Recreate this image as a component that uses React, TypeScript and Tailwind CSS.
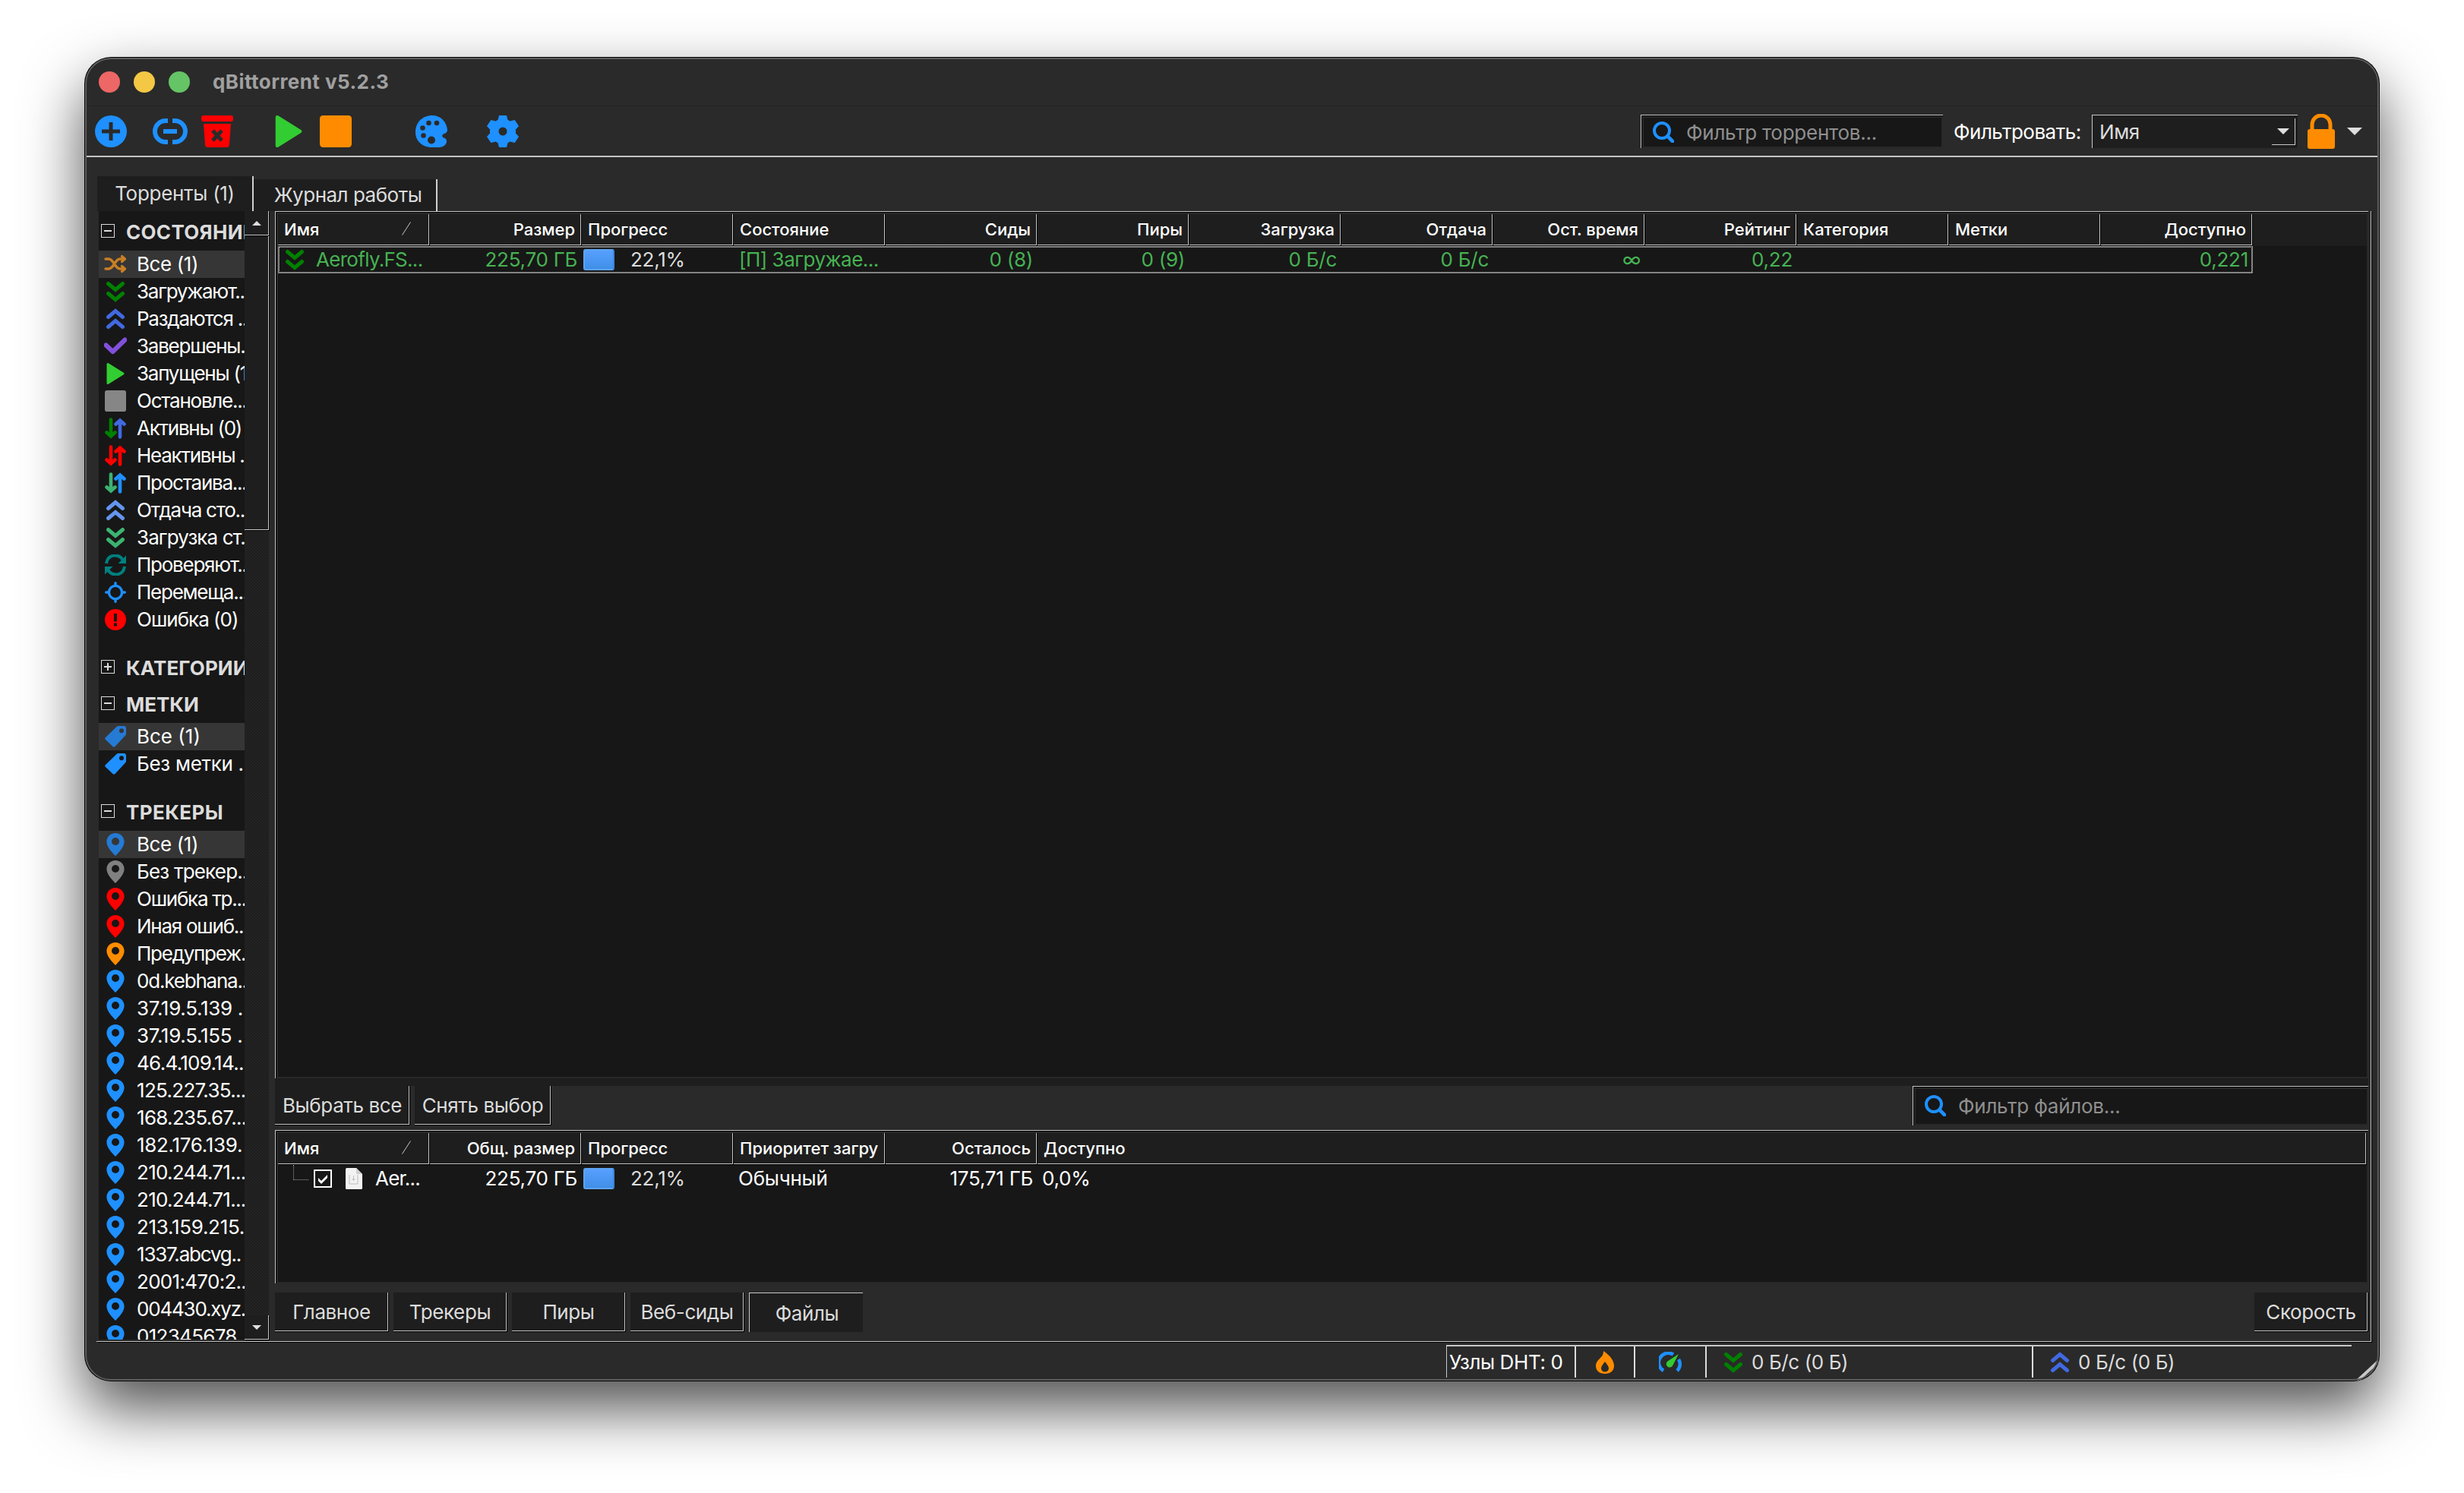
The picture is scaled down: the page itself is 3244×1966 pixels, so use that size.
import type { ReactNode } from "react";
import clsx from "clsx";

type IconProps = { className?: string };

const Chevrons = ({ className }: IconProps) => (
  <svg viewBox="0 0 28 28" className={clsx("w-7 h-7 shrink-0", className)} fill="none" stroke="currentColor" strokeWidth="5" strokeLinecap="round">
    <path d="M4.5 3.5 14 11.5 23.5 3.5M4.5 16.5 14 24.5 23.5 16.5" />
  </svg>
);

const Shuffle = ({ className }: IconProps) => (
  <svg viewBox="-1 0 30 28" className={clsx("w-[30px] h-7 shrink-0 -mx-px", className)} fill="none" stroke="currentColor" strokeWidth="3.4" strokeLinecap="round" strokeLinejoin="round">
    <path d="M1 7H5C12 7 13 20 20 20H25M1 20H5C12 20 13 7 20 7H25M22.500 3.500 26.500 7 22.500 10.500M22.500 16.500 26.500 20 22.500 23.500" />
  </svg>
);

const Check = ({ className }: IconProps) => (
  <svg viewBox="-1 0 30 28" className={clsx("w-[30px] h-7 shrink-0 -mx-px", className)} fill="none" stroke="currentColor" strokeWidth="6">
    <path d="M1.500 12.500 10.500 21 26.500 5.500" strokeLinejoin="round" strokeLinecap="round" />
  </svg>
);

const Play = ({ className }: IconProps) => (
  <svg viewBox="0 0 28 28" className={clsx("shrink-0", className)} fill="currentColor" stroke="currentColor" strokeWidth="3" strokeLinejoin="round">
    <path d="M4 1.500 24 14 4 26.500Z" />
  </svg>
);

const Square = ({ className }: IconProps) => (
  <svg viewBox="0 0 28 28" className={clsx("shrink-0", className)} fill="currentColor">
    <rect width="28" height="28" rx="2.800" />
  </svg>
);

const UpDown = ({ down, up }: { down: string; up: string }) => (
  <svg viewBox="0 0 28 28" className="w-7 h-7 shrink-0" fill="none" strokeWidth="4.6" strokeLinecap="round">
    <path d="M8 2.500V24M2.500 19.500 8 24.500 13.500 19.500" className={down} />
    <path d="M20 25.500V4M14.500 8.500 20 3.500 25.500 8.500" className={up} />
  </svg>
);

const Refresh = ({ className }: IconProps) => (
  <svg viewBox="0 0 28 28" className={clsx("w-7 h-7 shrink-0", className)} fill="none" stroke="currentColor" strokeWidth="4">
    <path d="M2 12C4 -1 18 -1 23.500 7M26 16C24 29 10 29 4.500 21" />
    <path d="M28 1.500V12H17.500ZM0 26.500V16H10.500Z" fill="currentColor" stroke="none" />
  </svg>
);

const Crosshair = ({ className }: IconProps) => (
  <svg viewBox="0 0 28 28" className={clsx("w-7 h-7 shrink-0", className)} fill="none" stroke="currentColor" strokeWidth="3.4" strokeLinecap="round">
    <circle cx="14" cy="14" r="8.600" />
    <path d="M14 1.700V5M14 23V26.300M1.700 14H5M23 14H26.300" />
  </svg>
);

const ErrorMark = ({ className }: IconProps) => (
  <svg viewBox="0 0 28 28" className={clsx("w-7 h-7 shrink-0", className)} fill="currentColor">
    <circle cx="14" cy="14" r="14" />
    <path d="M12 6H16V16.500H12ZM12 18.500H16V22.500H12Z" fill="#171717" />
  </svg>
);

const Tag = ({ className }: IconProps) => (
  <svg viewBox="0 0 28 28" className={clsx("w-7 h-7 shrink-0", className)} fill="currentColor" fillRule="evenodd">
    <path d="M15.500 1Q16.500 0 18 0H25Q28 0 28 3V10Q28 11.500 27 12.500L13.500 27Q12 28.500 10.500 27L1 18Q-.6 16.500 1 15ZM22 3.200A3 3 0 1 0 22 9.200 3 3 0 1 0 22 3.200Z" />
  </svg>
);

const Pin = ({ className }: IconProps) => (
  <svg viewBox="0 0 28 30" className={clsx("w-7 h-[30px] shrink-0", className)} fill="currentColor" fillRule="evenodd">
    <path d="M14 0C7.500 0 2.400 5 2.400 11.300 2.400 18.500 10.500 26.500 14 30 17.500 26.500 25.600 18.500 25.600 11.300 25.600 5 20.500 0 14 0ZM14 6A5 5 0 1 0 14 16 5 5 0 1 0 14 6Z" />
  </svg>
);

const Search = () => (
  <svg viewBox="0 0 28 28" className="w-7 h-7 shrink-0 text-[#1e90ff]" fill="none" stroke="currentColor" strokeLinecap="round">
    <circle cx="12" cy="12" r="10" strokeWidth="4" />
    <path d="M19.500 19.500 26 26" strokeWidth="4.600" />
  </svg>
);

const Down = ({ className }: IconProps) => (
  <svg viewBox="0 0 20 10" className={className} fill="#dedede">
    <path d="M0 0H20L10 10Z" />
  </svg>
);

type Item = { label: string; icon: ReactNode; selected?: boolean; tracking?: string };

const statuses: Item[] = [
  { label: "Все (1)", icon: <Shuffle className="text-[#c97f24]" />, selected: true, tracking: "tracking-[-0.4px]" },
  { label: "Загружают..", icon: <Chevrons className="text-[#008000]" /> },
  { label: "Раздаются ..", icon: <Chevrons className="text-[#4169e1] rotate-180" /> },
  { label: "Завершены.", icon: <Check className="text-[#8250dc]" /> },
  { label: "Запущены (1)", icon: <Play className="w-7 h-7 text-[#32cd32]" /> },
  { label: "Остановле...", icon: <Square className="w-7 h-7 text-[#868686]" /> },
  { label: "Активны (0)", icon: <UpDown down="stroke-[#008000]" up="stroke-[#4169e1]" /> },
  { label: "Неактивны .", icon: <UpDown down="stroke-[#ff0000]" up="stroke-[#ff0000]" /> },
  { label: "Простаива...", icon: <UpDown down="stroke-[#3cb371]" up="stroke-[#1e90ff]" /> },
  { label: "Отдача сто..", icon: <Chevrons className="text-[#6495ed] rotate-180" /> },
  { label: "Загрузка ст.", icon: <Chevrons className="text-[#3cb371]" />, tracking: "tracking-[-0.9px]" },
  { label: "Проверяют..", icon: <Refresh className="text-[#008080]" /> },
  { label: "Перемеща...", icon: <Crosshair className="text-[#1e90ff]" /> },
  { label: "Ошибка (0)", icon: <ErrorMark className="text-[#ff0000]" />, tracking: "tracking-[-1px]" },
];

const tags: Item[] = [
  { label: "Все (1)", icon: <Tag className="text-[#257ad4]" />, selected: true, tracking: "tracking-normal" },
  { label: "Без метки .", icon: <Tag className="text-[#1e90ff]" />, tracking: "tracking-[-0.3px]" },
];

const hosts = [
  "0d.kebhana..",
  "37.19.5.139 .",
  "37.19.5.155 .",
  "46.4.109.14..",
  "125.227.35...",
  "168.235.67...",
  "182.176.139.",
  "210.244.71...",
  "210.244.71...",
  "213.159.215.",
  "1337.abcvg..",
  "2001:470:2..",
  "004430.xyz.",
  "012345678",
];

const trackers: Item[] = [
  { label: "Все (1)", icon: <Pin className="text-[#257ad4]" />, selected: true, tracking: "tracking-[-0.4px]" },
  { label: "Без трекер..", icon: <Pin className="text-[#808080]" />, tracking: "tracking-[-0.8px]" },
  { label: "Ошибка тр...", icon: <Pin className="text-[#ff0000]" /> },
  { label: "Иная ошиб...", icon: <Pin className="text-[#ff0000]" /> },
  { label: "Предупреж.", icon: <Pin className="text-[#ff8c00]" /> },
  ...hosts.map((label) => ({
    label,
    icon: <Pin className="text-[#1e90ff]" />,
    tracking: /[a-z]/.test(label) ? "tracking-[-1.2px]" : /(\.\.|\d)$/.test(label) ? "tracking-[-0.7px]" : "tracking-[-0.3px]",
  })),
];

type GroupProps = { title: string; open?: boolean; items?: Item[]; className?: string };

const Group = ({ title, open = true, items = [], className }: GroupProps) => (
  <section className="mb-[22px]">
    <h2 className={clsx("flex h-12 pl-[3px] text-[26px] leading-12 font-bold text-[#dcdcdc] whitespace-nowrap", className)}>
      <svg viewBox="0 0 18 18" className="w-[18px] h-[18px] mt-[13px] mr-[15px] shrink-0" fill="none" stroke="#dcdcdc" strokeWidth="2">
        <rect x=".5" y=".5" width="17" height="17" strokeWidth="1" />
        <path d={open ? "M4 9H14" : "M4 9H14M9 4V14"} />
      </svg>
      {title}
    </h2>
    {items.map((item, i) => (
      <div key={i} className={clsx("flex h-9 items-center pl-2", item.selected && "bg-[#363636]")}>
        {item.icon}
        <span className={clsx("ml-[14px] text-[26px] leading-9 text-white whitespace-nowrap", item.tracking ?? "tracking-[-1.25px]")}>
          {item.label}
        </span>
      </div>
    ))}
  </section>
);

const Sidebar = () => (
  <aside className="flex w-[226px] h-[1486px] shrink-0">
    <div className="w-48 h-full pt-1 overflow-hidden bg-[#171717]">
      <Group title="СОСТОЯНИЕ" items={statuses} className="tracking-[0.3px]" />
      <div className="-mb-[22px]">
        <Group title="КАТЕГОРИИ" open={false} className="tracking-[0.1px]" />
      </div>
      <Group title="МЕТКИ" items={tags} />
      <Group title="ТРЕКЕРЫ" items={trackers} className="tracking-[0.4px]" />
    </div>
    <div className="flex flex-col w-8 bg-[repeating-conic-gradient(#1e1e1e_0_25%,#232323_0_50%)] bg-size-[4px_4px]">
      <div className="flex h-8 items-center justify-center bg-[#1e1e1e] border-r border-b border-[#c8c8c8] shadow-[1px_1px_0_#000]">
        <Down className="w-3 h-[6px] rotate-180" />
      </div>
      <div className="h-[387px] mt-px bg-[#1e1e1e] border-r border-b border-[#c8c8c8] shadow-[1px_1px_0_#000]" />
      <div className="flex h-8 mt-auto items-center justify-center bg-[#1e1e1e] border-r border-b border-[#c8c8c8] shadow-[1px_1px_0_#000]">
        <Down className="w-3 h-[6px]" />
      </div>
    </div>
  </aside>
);

// Sunken frame: light edge, black edge, grey edge
const Sunken = ({ className, children }: { className?: string; children: ReactNode }) => (
  <div className="border-t border-l border-[#c8c8c8]">
    <div className="border-t border-l border-black">
      <div className={clsx("border-2 border-[#282828] bg-[#171717]", className)}>{children}</div>
    </div>
  </div>
);

const HeadCell = ({ label, right, sorted, last }: { label: string; right?: boolean; sorted?: boolean; last?: boolean }) => (
  <div className={clsx("h-[42px] border-r border-b border-black bg-[#1e1e1e]", last ? "flex-1" : "w-[200px] shrink-0")}>
    <div
      className={clsx(
        "flex h-[41px] items-center pl-2 pr-[7px] border-r border-b border-[#c8c8c8] text-[22px] font-medium text-white whitespace-nowrap overflow-hidden",
        right ? "justify-end" : "justify-between",
      )}
    >
      {label}
      {sorted && (
        <svg viewBox="0 0 12 18" className="w-3 h-[18px] mr-4 -mt-[2px] shrink-0" stroke="#c8c8c8">
          <path d="M.5 17.500 11.500 .5" />
        </svg>
      )}
    </div>
  </div>
);

const Progress = ({ className }: IconProps) => (
  <div className="flex items-center w-[200px] pl-[2px] shrink-0">
    <div className="w-[41px] h-7 rounded-[3px] bg-linear-to-b from-[#579fff] to-[#3f8fe8] border-2 border-[#5da4f4] border-r-[#3b84d8]" />
    <span className={clsx("ml-[21px]", className)}>22,1%</span>
  </div>
);

const columns = [
  { label: "Имя", sorted: true },
  { label: "Размер", right: true },
  { label: "Прогресс" },
  { label: "Состояние" },
  { label: "Сиды", right: true },
  { label: "Пиры", right: true },
  { label: "Загрузка", right: true },
  { label: "Отдача", right: true },
  { label: "Ост. время", right: true },
  { label: "Рейтинг", right: true },
  { label: "Категория" },
  { label: "Метки" },
  { label: "Доступно", right: true },
];

const fileColumns = [
  { label: "Имя", sorted: true },
  { label: "Общ. размер", right: true },
  { label: "Прогресс" },
  { label: "Приоритет загру" },
  { label: "Осталось", right: true },
  { label: "Доступно", last: true },
];

const Num = ({ children }: { children?: ReactNode }) => (
  <div className="w-[200px] pr-[6px] shrink-0 text-right">{children}</div>
);

const TorrentTable = () => (
  <Sunken className="h-[1140px]">
    <div className="flex bg-[#1e1e1e]">
      {columns.map((c) => (
        <HeadCell key={c.label} {...c} />
      ))}
    </div>
    <div className="w-[2600px] h-9 p-[2px] bg-[repeating-conic-gradient(#f0f0f0_0_25%,#171717_0_50%)] bg-size-[2px_2px]">
      <div className="flex h-8 -mx-[2px] items-center bg-[#171717] bg-clip-padding border-x-2 border-transparent text-[26px] leading-8 tracking-[-0.25px] text-[#46b252] whitespace-nowrap">
        <div className="flex w-[198px] shrink-0 items-center pl-[6px]">
          <Chevrons className="text-[#008000]" />
          <span className="ml-[14px] tracking-[-0.7px]">Aerofly.FS...</span>
        </div>
        <Num>225,70 ГБ</Num>
        <Progress className="text-[#dcdcdc]" />
        <div className="w-[200px] pl-[7px] shrink-0 tracking-[-0.5px]">[П] Загружае...</div>
        <Num>0 (8)</Num>
        <Num>0 (9)</Num>
        <Num>0 Б/с</Num>
        <Num>0 Б/с</Num>
        <Num>∞</Num>
        <Num>0,22</Num>
        <Num />
        <Num />
        <div className="w-[196px] pr-[2px] text-right">0,221</div>
      </div>
    </div>
  </Sunken>
);

const FileTable = () => (
  <Sunken className="h-[200px]">
    <div className="flex">
      {fileColumns.map((c) => (
        <HeadCell key={c.label} {...c} />
      ))}
    </div>
    <div className="flex h-[35px] items-center text-[26px] leading-[35px] tracking-[-0.25px] text-white whitespace-nowrap">
      <div className="flex w-[200px] shrink-0 items-center">
        <div className="w-5 h-5 ml-5 -mt-4 border-l border-b border-dotted border-[#a0a0a0]" />
        <svg viewBox="0 0 24 24" className="w-6 h-6 ml-[7px]" fill="none" stroke="#fff" strokeWidth="2">
          <rect x="1" y="1" width="22" height="22" />
          <path d="M6 11V15L10 19 18 11V7L10 15Z" fill="#fff" stroke="none" />
        </svg>
        <svg viewBox="0 0 22 28" className="w-[22px] h-7 ml-[18px]">
          <path d="M1.500 0H14L22 8V26.500Q22 28 20.500 28H1.500Q0 28 0 26.500V1.500Q0 0 1.500 0Z" fill="#f2f2f2" />
          <path d="M14 0 22 8H15.500Q14 8 14 6.500Z" fill="#cfcfcf" />
          <path d="M5 9V21H16V9M10.500 10V16M8.500 14 10.500 16.500 12.500 14" fill="none" stroke="#bdbdbd" />
        </svg>
        <span className="ml-[17px] tracking-[-0.8px]">Aer...</span>
      </div>
      <Num>225,70 ГБ</Num>
      <Progress className="text-[#dcdcdc]" />
      <div className="w-[200px] pl-[6px] shrink-0">Обычный</div>
      <Num>175,71 ГБ</Num>
      <div className="pl-[6px]">0,0%</div>
    </div>
  </Sunken>
);

const Button = ({ className, pressed, children }: { className?: string; pressed?: boolean; children: ReactNode }) => (
  <button
    className={clsx(
      "flex h-[52px] items-center justify-center bg-[#1e1e1e] text-[26px] tracking-[-0.4px] text-[#dcdcdc] whitespace-nowrap",
      pressed
        ? "border-t border-l border-[#c8c8c8] pt-px pl-[2px]"
        : "border-r border-b border-black shadow-[inset_-1px_-1px_0_#c8c8c8]",
      className,
    )}
  >
    {children}
  </button>
);

const TitleBar = () => (
  <header className="flex h-16 items-center pl-[18px] border-b border-[#222]">
    <div className="flex gap-[18px]">
      <span className="w-7 h-7 rounded-full bg-[#ec6765]" />
      <span className="w-7 h-7 rounded-full bg-[#f4c844]" />
      <span className="w-7 h-7 rounded-full bg-[#65c466]" />
    </div>
    <h1 className="ml-[30px] text-[26px] font-bold tracking-[0.45px] text-[#a0a0a0]">qBittorrent v5.2.3</h1>
  </header>
);

const ToolBar = () => (
  <div className="flex h-[67px] items-center pl-[13px] pt-px border-b-2 border-[#c4c4c4]">
    <svg viewBox="0 0 42 42" className="w-[42px] h-[42px]">
      <circle cx="21" cy="21" r="21" fill="#1e90ff" />
      <path d="M21 9V33M9 21H33" stroke="#2a2a2a" strokeWidth="5" />
    </svg>
    <svg viewBox="0 0 46 34" className="w-[46px] h-[34px] ml-[34px]" fill="none" stroke="#1e90ff" strokeWidth="6">
      <path d="M20 3H17A14 14 0 0 0 17 31H20M26 3H29A14 14 0 0 1 29 31H26M14 17H32" />
    </svg>
    <svg viewBox="0 0 42 42" className="w-[42px] h-[42px] ml-[18px]" fill="#f00">
      <rect width="42" height="8" rx="3" />
      <path d="M3 11H39L37 38.500Q36.700 42 33.500 42H8.500Q5.300 42 5 38.500Z" />
      <path d="M15 20 27 33M27 20 15 33" stroke="#2a2a2a" strokeWidth="5" />
    </svg>
    <Play className="w-[42px] h-[42px] ml-[52px] text-[#32cd32]" />
    <Square className="w-[42px] h-[42px] ml-5 text-[#ff8c00]" />
    <svg viewBox="0 0 42 42" className="w-[42px] h-[42px] ml-[84px]">
      <path d="M22 0C9 0 0 9.500 0 22S10 42 22 42H31C37 42 41 38 41 34 41 31 39 30 37.500 29.500 35 29 34 25 38 24Q42 23 42 19C41 8 33 0 22 0Z" fill="#1e90ff" />
      <g fill="#2a2a2a">
        <circle cx="17.500" cy="10" r="3.300" />
        <circle cx="28" cy="10" r="3.300" />
        <circle cx="9.500" cy="16.500" r="3.300" />
        <circle cx="10.500" cy="26.500" r="3.300" />
        <circle cx="21" cy="32.500" r="5" />
      </g>
    </svg>
    <svg viewBox="0 0 42 42" className="w-[42px] h-[42px] ml-[52px]">
      <path
        d="M16.500 0H25.500L27 6 30.500 8 36.500 6.500 41.500 14 37.500 18.500V23.500L41.500 28 36.500 35.500 30.500 34 27 36 25.500 42H16.500L15 36 11.500 34 5.500 35.500 .5 28 4.500 23.500V18.500L.5 14 5.500 6.500 11.500 8 15 6Z"
        fill="#1e90ff"
        stroke="#1e90ff"
        strokeLinejoin="round"
      />
      <circle cx="21" cy="21" r="5.500" fill="#2a2a2a" />
    </svg>

    <div className="w-[398px] ml-auto">
      <Sunken className="flex h-[42px] items-center pl-3">
        <Search />
        <span className="ml-4 text-[26px] tracking-[-0.25px] text-[#8f8f8f]">Фильтр торрентов...</span>
      </Sunken>
    </div>
    <span className="w-[182px] ml-[14px] text-[26px] tracking-[-0.5px] text-white whitespace-nowrap">Фильтровать:</span>
    <div className="flex w-[271px] h-11 items-center pl-[9px] bg-[#1e1e1e] border-t border-l border-[#c8c8c8] text-[26px] tracking-[-0.4px] text-[#dcdcdc]">
      Имя
      <div className="flex w-[31px] h-[35px] ml-auto mr-[3px] items-center justify-center border-r border-b border-[#c8c8c8]">
        <Down className="w-4 h-2" />
      </div>
    </div>
    <svg viewBox="0 0 36 46" className="w-9 h-[46px] ml-[13px]">
      <path d="M6 22V14A12 12 0 0 1 30 14V22" fill="none" stroke="#ff8c00" strokeWidth="5" />
      <rect y="20" width="36" height="26" rx="3" fill="#ff8c00" />
    </svg>
    <Down className="w-5 h-[10px] ml-4 mr-[22px]" />
  </div>
);

const StatusBar = () => (
  <footer className="flex h-[43px] mt-1 ml-[1792px] w-[1192px] border-t-2 border-l border-[#c8c8c8] text-[26px] tracking-[-0.4px] text-[#dcdcdc] whitespace-nowrap">
    <div className="flex w-[170px] pl-[3px] items-center text-white border-r-2 border-[#dcdcdc]">Узлы DHT: 0</div>
    <div className="flex w-[78px] items-center justify-center border-r-2 border-[#dcdcdc]">
      <svg viewBox="0 0 24 30" className="w-6 h-[30px]">
        <path d="M10 0C19 6 24 13 24 19.500 24 26 19 30 12 30S0 26 0 19.500C0 15 3 12 6 9 9 6 10 4 10 0ZM12 14C9 18 7 20 7 23A5 4.500 0 0 0 17 23C17 20 15 18 12 14Z" fill="#ff8c00" fillRule="evenodd" />
      </svg>
    </div>
    <div className="flex w-[94px] items-center justify-center border-r-2 border-[#dcdcdc]">
      <svg viewBox="0 0 30 28" className="w-[30px] h-7" fill="none">
        <path d="M6 25A12 12 0 0 1 19 3.500M26 10A12 12 0 0 1 24 25" stroke="#1e90ff" strokeWidth="4.500" />
        <path d="M26 3 18.500 17.500A4.500 4.500 0 1 1 11.500 12.500Z" fill="#32cd32" />
      </svg>
    </div>
    <div className="flex w-[430px] pl-[21px] items-center border-r-2 border-[#dcdcdc]">
      <Chevrons className="text-[#008000]" />
      <span className="ml-[10px]">0 Б/с (0 Б)</span>
    </div>
    <div className="flex pl-[21px] items-center">
      <Chevrons className="text-[#4169e1] rotate-180" />
      <span className="ml-[10px]">0 Б/с (0 Б)</span>
    </div>
  </footer>
);

const App = () => {
  return (
    <div className="w-[3244px] h-[1966px] pl-28 pt-[76px] bg-white overflow-hidden font-['Inter','Noto_Sans',sans-serif]">
      <div className="relative w-[3020px] h-[1742px] rounded-[34px] overflow-hidden bg-[#2a2a2a] shadow-[0_0_0_1px_#000,0_36px_80px_rgba(0,0,0,0.7)]">
        <TitleBar />
        <ToolBar />

        <nav className="flex h-[71px] items-end pl-4 text-[26px] tracking-[-0.3px] text-[#dcdcdc]">
          <div className="flex w-[206px] h-[46px] pb-px items-center justify-center bg-[#1e1e1e] border-r-2 border-[#d0d0d0]">
            Торренты (1)
          </div>
          <div className="flex w-[242px] h-[42px] pl-2 pb-px items-center justify-center bg-[#1e1e1e] border-r-2 border-[#d0d0d0] tracking-[-0.5px]">
            Журнал работы
          </div>
        </nav>

        <main className="flex w-[2995px] h-[1489px] ml-[15px] pl-[3px] border-r border-b border-[#c8c8c8] shadow-[1px_1px_0_#000]">
          <Sidebar />
          <div className="w-[2756px] ml-[6px]">
            <TorrentTable />
            <div className="flex h-[10px] bg-[#1e1e1e]" />
            <div className="flex h-[58px]">
              <Button className="w-[178px]">Выбрать все</Button>
              <Button className="w-[180px] ml-[6px]">Снять выбор</Button>
              <div className="w-[600px] ml-auto">
                <Sunken className="flex h-[50px] items-center pl-3 pb-[2px]">
                  <Search />
                  <span className="ml-4 text-[26px] tracking-[-0.25px] text-[#8f8f8f]">Фильтр файлов...</span>
                </Sunken>
              </div>
            </div>
            <FileTable />
            <div className="flex mt-3 gap-[6px]">
              <Button className="w-[150px]">Главное</Button>
              <Button className="w-[150px]">Трекеры</Button>
              <Button className="w-[150px]">Пиры</Button>
              <Button className="w-[150px]">Веб-сиды</Button>
              <Button className="w-[150px]" pressed>
                Файлы
              </Button>
              <Button className="w-[150px] ml-auto">Скорость</Button>
            </div>
          </div>
        </main>
        <StatusBar />

        {/* size grip and window outline */}
        <svg viewBox="0 0 30 30" className="absolute right-0 bottom-0 w-[30px] h-[30px]" stroke="#c8c8c8">
          <path d="M2 30 30 4" strokeWidth="4" />
          <path d="M10 30 30 11" strokeWidth="1" />
        </svg>
        <div className="absolute inset-0 rounded-[34px] border-2 border-[#5e5e5e] pointer-events-none" />
      </div>
    </div>
  );
};

export default App;
